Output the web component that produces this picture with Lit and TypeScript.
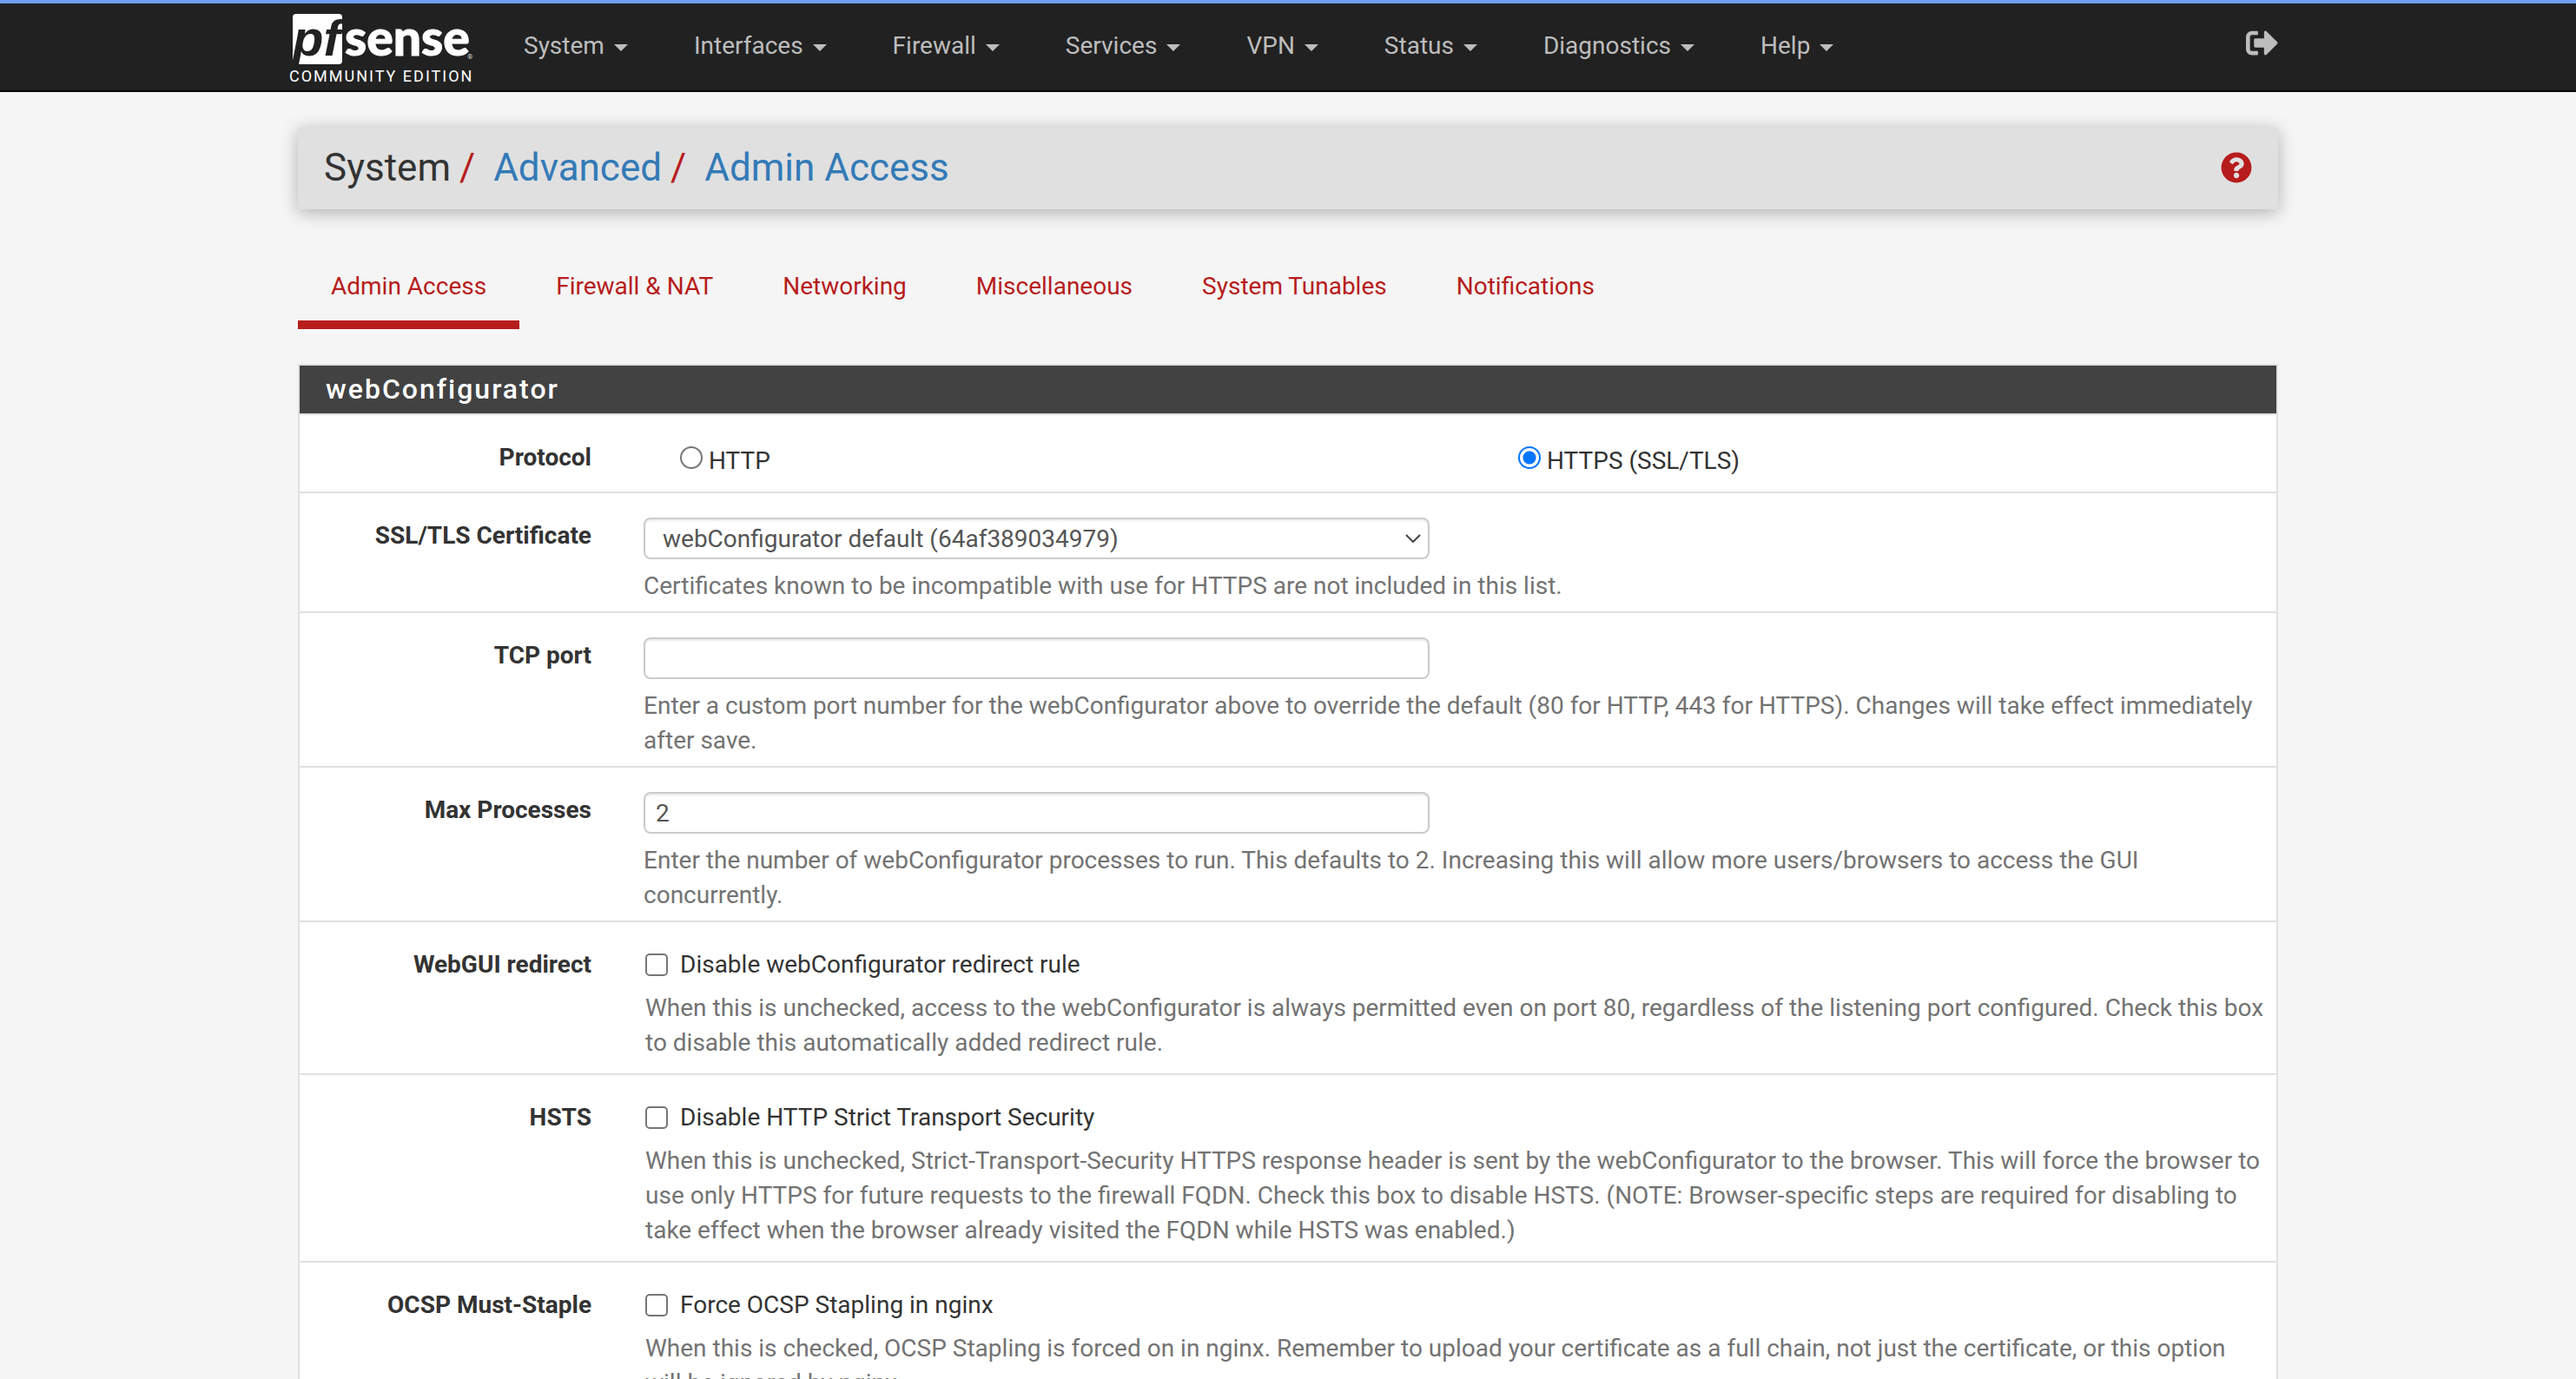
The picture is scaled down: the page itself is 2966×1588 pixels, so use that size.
import { LitElement, html, css, type TemplateResult } from "lit";
import { customElement, state } from "lit/decorators.js";

const MENUS = ["System", "Interfaces", "Firewall", "Services", "VPN", "Status", "Diagnostics", "Help"];

const TABS = ["Admin Access", "Firewall & NAT", "Networking", "Miscellaneous", "System Tunables", "Notifications"];

interface CheckSetting {
  id: string;
  title: string;
  label: string;
  help: string;
}

const CHECKS: CheckSetting[] = [
  {
    id: "redirect",
    title: "WebGUI redirect",
    label: "Disable webConfigurator redirect rule",
    help: "When this is unchecked, access to the webConfigurator is always permitted even on port 80, regardless of the listening port configured. Check this box to disable this automatically added redirect rule.",
  },
  {
    id: "hsts",
    title: "HSTS",
    label: "Disable HTTP Strict Transport Security",
    help: "When this is unchecked, Strict-Transport-Security HTTPS response header is sent by the webConfigurator to the browser. This will force the browser to use only HTTPS for future requests to the firewall FQDN. Check this box to disable HSTS. (NOTE: Browser-specific steps are required for disabling to take effect when the browser already visited the FQDN while HSTS was enabled.)",
  },
  {
    id: "ocsp",
    title: "OCSP Must-Staple",
    label: "Force OCSP Stapling in nginx",
    help: "When this is checked, OCSP Stapling is forced on in nginx. Remember to upload your certificate as a full chain, not just the certificate, or this option will be ignored by nginx.",
  },
];

@customElement("app-root")
export class AppRoot extends LitElement {
  @state() private tab = TABS[0];
  @state() private protocol = "https";

  static styles = css`
    :host {
      display: block;
      min-height: 100vh;
      background: #f5f5f5;
      color: #333;
      font-family: Roboto, "Liberation Sans", sans-serif;
      font-size: 28px;
      line-height: 40px;
    }
    *,
    *::before,
    *::after {
      box-sizing: border-box;
    }
    a {
      color: inherit;
      text-decoration: none;
    }
    button,
    input,
    select {
      font: inherit;
      color: inherit;
      margin: 0;
    }

    .topbar {
      background: #212121;
      border-top: 4px solid #6e9ef0;
      border-bottom: 2px solid #080808;
    }
    .topbar-inner {
      display: flex;
      align-items: flex-start;
      max-width: 2340px;
      height: 100px;
      margin: 0 auto;
      padding: 0 30px 0 20px;
    }
    .brand {
      flex: none;
      display: block;
      width: 214px;
      margin-right: 56px;
      padding-top: 8px;
    }
    .logo {
      display: block;
      width: 214px;
      height: 64px;
      overflow: visible;
    }
    .logo-word {
      font-family: Lato, sans-serif;
      font-weight: 900;
      font-size: 57px;
      fill: #fff;
      stroke: #fff;
      stroke-width: 1px;
    }
    .logo-pf {
      font-family: "Liberation Sans", sans-serif;
      font-weight: 700;
      font-style: italic;
      font-size: 58px;
      fill: #212121;
    }
    .logo-reg {
      font-size: 8px;
      fill: #ddd;
    }
    .edition {
      display: block;
      color: #fff;
      font-size: 18px;
      line-height: 24px;
      letter-spacing: 2px;
      white-space: nowrap;
    }
    .menus {
      display: flex;
      gap: 76px;
      padding-top: 29px;
    }
    .menu {
      display: flex;
      align-items: center;
      gap: 11px;
      padding: 0;
      border: 0;
      background: none;
      color: #bdbdbd;
      cursor: pointer;
    }
    .caret {
      border: 8px solid transparent;
      border-top-color: currentColor;
      border-bottom: 0;
      margin-top: 4px;
    }
    .logout {
      margin-left: auto;
      padding-top: 27px;
      color: #bdbdbd;
    }
    .logout svg {
      display: block;
      width: 37px;
      height: 37px;
      fill: currentColor;
    }

    .page {
      max-width: 2340px;
      margin: 0 auto;
      padding: 40px 30px 0;
    }
    .title {
      display: flex;
      align-items: center;
      justify-content: space-between;
      padding: 17px 30px 18px;
      border-radius: 4px;
      background: #e0e0e0;
      box-shadow: 0 4px 20px rgba(0, 0, 0, 0.28);
    }
    .crumbs {
      display: flex;
      margin: 0;
      padding: 0;
      list-style: none;
      font-size: 44px;
      line-height: 60px;
    }
    .crumb a {
      color: #337ab7;
    }
    .crumb + .crumb::before {
      content: "/";
      margin: 0 21px 0 10px;
      color: #b71c1c;
    }
    .help-link svg {
      display: block;
      width: 36px;
      height: 36px;
      fill: #b71c1c;
    }

    .tabs {
      display: flex;
      gap: 4px;
      margin: 48px 0 40px;
    }
    .tab {
      padding: 21px 38px 19px;
      border-bottom: 10px solid transparent;
      color: #b71c1c;
    }
    .tab.active {
      border-bottom-color: #b71c1c;
    }

    .panel {
      border: 2px solid #e0e0e0;
      background: #fff;
    }
    .panel-title {
      margin: 0;
      padding: 7px 30px 8px;
      border-bottom: 2px solid #e0e0e0;
      background: #424242;
      background-clip: padding-box;
      color: #fff;
      font-size: 32px;
      font-weight: 500;
      line-height: 40px;
      letter-spacing: 2px;
    }
    .row {
      display: grid;
      grid-template-columns: 366px minmax(0, 1fr);
      padding: 28px 14px 9px 0;
      border-bottom: 2px solid #e0e0e0;
    }
    .row.loose {
      padding-bottom: 15px;
    }
    .row-label {
      padding: 1px 30px 0 0;
      font-weight: 700;
      text-align: right;
    }
    .row-body {
      padding-left: 30px;
    }
    .field {
      display: grid;
      width: calc(50% - 28px);
      height: 48px;
    }
    .control {
      grid-area: 1 / 1;
      width: 100%;
      height: 48px;
      padding: 0 12px;
      border: 2px solid #ccc;
      border-radius: 8px;
      background: #fff;
      box-shadow: inset 0 2px 2px rgba(0, 0, 0, 0.075);
      color: #555;
      appearance: none;
    }
    select.control {
      padding: 1px 48px 0 20px;
    }
    .chevron {
      grid-area: 1 / 1;
      place-self: center end;
      width: 18px;
      height: 10px;
      margin-right: 10px;
      fill: none;
      stroke: #444;
      stroke-width: 2;
      pointer-events: none;
    }
    .help {
      margin: 11px 0 0;
      color: #737373;
    }
    .indent {
      padding-left: 2px;
    }
    .indent .help {
      margin-top: 10px;
    }
    .radios {
      display: grid;
      grid-template-columns: 1fr 1fr;
      gap: 106px;
      padding: 5px 0 0 42px;
    }
    .option {
      display: flex;
      gap: 7px;
      width: fit-content;
    }
    .option.check {
      gap: 14px;
      padding-top: 1px;
    }
    .tick {
      flex: none;
      width: 26px;
      height: 26px;
      margin-top: 3px;
      border: 2px solid #767676;
      background: #fff;
      appearance: none;
    }
    .check .tick {
      margin-top: 7px;
      border-radius: 5px;
    }
    .check .tick:checked {
      border-color: #0075ff;
      background: #0075ff;
    }
    .radio .tick {
      border-radius: 50%;
    }
    .radio .tick:checked {
      border-color: #0075ff;
      background: radial-gradient(circle, #0075ff 7px, #fff 8px);
    }
  `;

  private row(title: string, id: string, body: TemplateResult, loose = false) {
    return html`<div class="row ${loose ? "loose" : ""}">
      <label class="row-label" for=${id}>${title}</label>
      <div class="row-body">${body}</div>
    </div>`;
  }

  private radio(value: string, text: string) {
    return html`<label class="option radio">
      <input
        class="tick"
        type="radio"
        name="protocol"
        value=${value}
        .checked=${this.protocol === value}
        @change=${() => (this.protocol = value)}
      />
      <span>${text}</span>
    </label>`;
  }

  render() {
    return html`
      <header class="topbar">
        <div class="topbar-inner">
          <a class="brand" href="#">
            <svg class="logo" viewBox="0 0 214 64" aria-label="pfSense">
              <path fill="#fff" d="M8 4h49a4 4 0 0 1 4 4v50a4 4 0 0 1-4 4H8a4 4 0 0 1-4-4V8a4 4 0 0 1 4-4z" />
              <text class="logo-pf" x="4" y="52">pf</text>
              <text class="logo-word" x="64" y="52">sense</text>
              <text class="logo-reg" x="205" y="56">®</text>
            </svg>
            <span class="edition">COMMUNITY EDITION</span>
          </a>
          <nav class="menus">
            ${MENUS.map((m) => html`<button class="menu" type="button">${m}<span class="caret"></span></button>`)}
          </nav>
          <a class="logout" href="#" aria-label="Logout">
            <svg viewBox="0 0 512 512">
              <path
                d="M497 273L329 441c-15 15-41 4.5-41-17v-96H152c-13.3 0-24-10.7-24-24v-96c0-13.3 10.7-24 24-24h136V88c0-21.4 25.9-32 41-17l168 168c9.3 9.4 9.3 24.6 0 34zM192 436v-40c0-6.6-5.4-12-12-12H96c-17.7 0-32-14.3-32-32V160c0-17.7 14.3-32 32-32h84c6.6 0 12-5.4 12-12V76c0-6.6-5.4-12-12-12H96c-53 0-96 43-96 96v192c0 53 43 96 96 96h84c6.6 0 12-5.4 12-12z"
              />
            </svg>
          </a>
        </div>
      </header>

      <main class="page">
        <div class="title">
          <ol class="crumbs">
            <li class="crumb">System</li>
            <li class="crumb"><a href="#">Advanced</a></li>
            <li class="crumb"><a href="#">Admin Access</a></li>
          </ol>
          <a class="help-link" href="#" aria-label="Help">
            <svg viewBox="0 0 512 512">
              <path
                d="M504 256c0 136.997-111.043 248-248 248S8 392.997 8 256C8 119.083 119.043 8 256 8s248 111.083 248 248zM262.655 90c-54.497 0-89.255 22.957-116.549 63.758-3.536 5.286-2.353 12.415 2.715 16.258l34.699 26.31c5.205 3.947 12.621 3.008 16.665-2.122 17.864-22.658 30.113-35.797 57.303-35.797 20.429 0 45.698 13.148 45.698 32.958 0 14.976-12.363 22.667-32.534 33.976C247.128 238.528 216 254.941 216 296v4c0 6.627 5.373 12 12 12h56c6.627 0 12-5.373 12-12v-1.333c0-28.462 83.186-29.647 83.186-106.667 0-58.002-60.165-102-116.531-102zM256 338c-25.365 0-46 20.635-46 46 0 25.364 20.635 46 46 46s46-20.636 46-46c0-25.365-20.635-46-46-46z"
              />
            </svg>
          </a>
        </div>

        <nav class="tabs">
          ${TABS.map(
            (t) => html`<a class="tab ${t === this.tab ? "active" : ""}" href="#" @click=${() => (this.tab = t)}>${t}</a>`
          )}
        </nav>

        <form class="panel">
          <h2 class="panel-title">webConfigurator</h2>
          <div class="row loose" role="radiogroup" aria-labelledby="protocol-title">
            <span class="row-label" id="protocol-title">Protocol</span>
            <div class="row-body">
              <div class="radios">${this.radio("http", "HTTP")}${this.radio("https", "HTTPS (SSL/TLS)")}</div>
            </div>
          </div>
          ${this.row(
            "SSL/TLS Certificate",
            "cert",
            html`<div class="field">
                <select class="control" id="cert">
                  <option>webConfigurator default (64af389034979)</option>
                </select>
                <svg class="chevron" viewBox="0 0 18 10"><path d="M1 1l8 8 8-8" /></svg>
              </div>
              <p class="help">Certificates known to be incompatible with use for HTTPS are not included in this list.</p>`
          )}
          ${this.row(
            "TCP port",
            "port",
            html`<div class="field"><input class="control" id="port" type="text" /></div>
              <p class="help">
                Enter a custom port number for the webConfigurator above to override the default (80 for HTTP, 443 for
                HTTPS). Changes will take effect immediately after save.
              </p>`
          )}
          ${this.row(
            "Max Processes",
            "procs",
            html`<div class="field"><input class="control" id="procs" type="text" value="2" /></div>
              <p class="help">
                Enter the number of webConfigurator processes to run. This defaults to 2. Increasing this will allow more
                users/browsers to access the GUI concurrently.
              </p>`
          )}
          ${CHECKS.map((c) =>
            this.row(
              c.title,
              c.id,
              html`<div class="indent">
                <label class="option check"><input class="tick" type="checkbox" id=${c.id} /><span>${c.label}</span></label>
                <p class="help">${c.help}</p>
              </div>`,
              true
            )
          )}
        </form>
      </main>
    `;
  }
}
